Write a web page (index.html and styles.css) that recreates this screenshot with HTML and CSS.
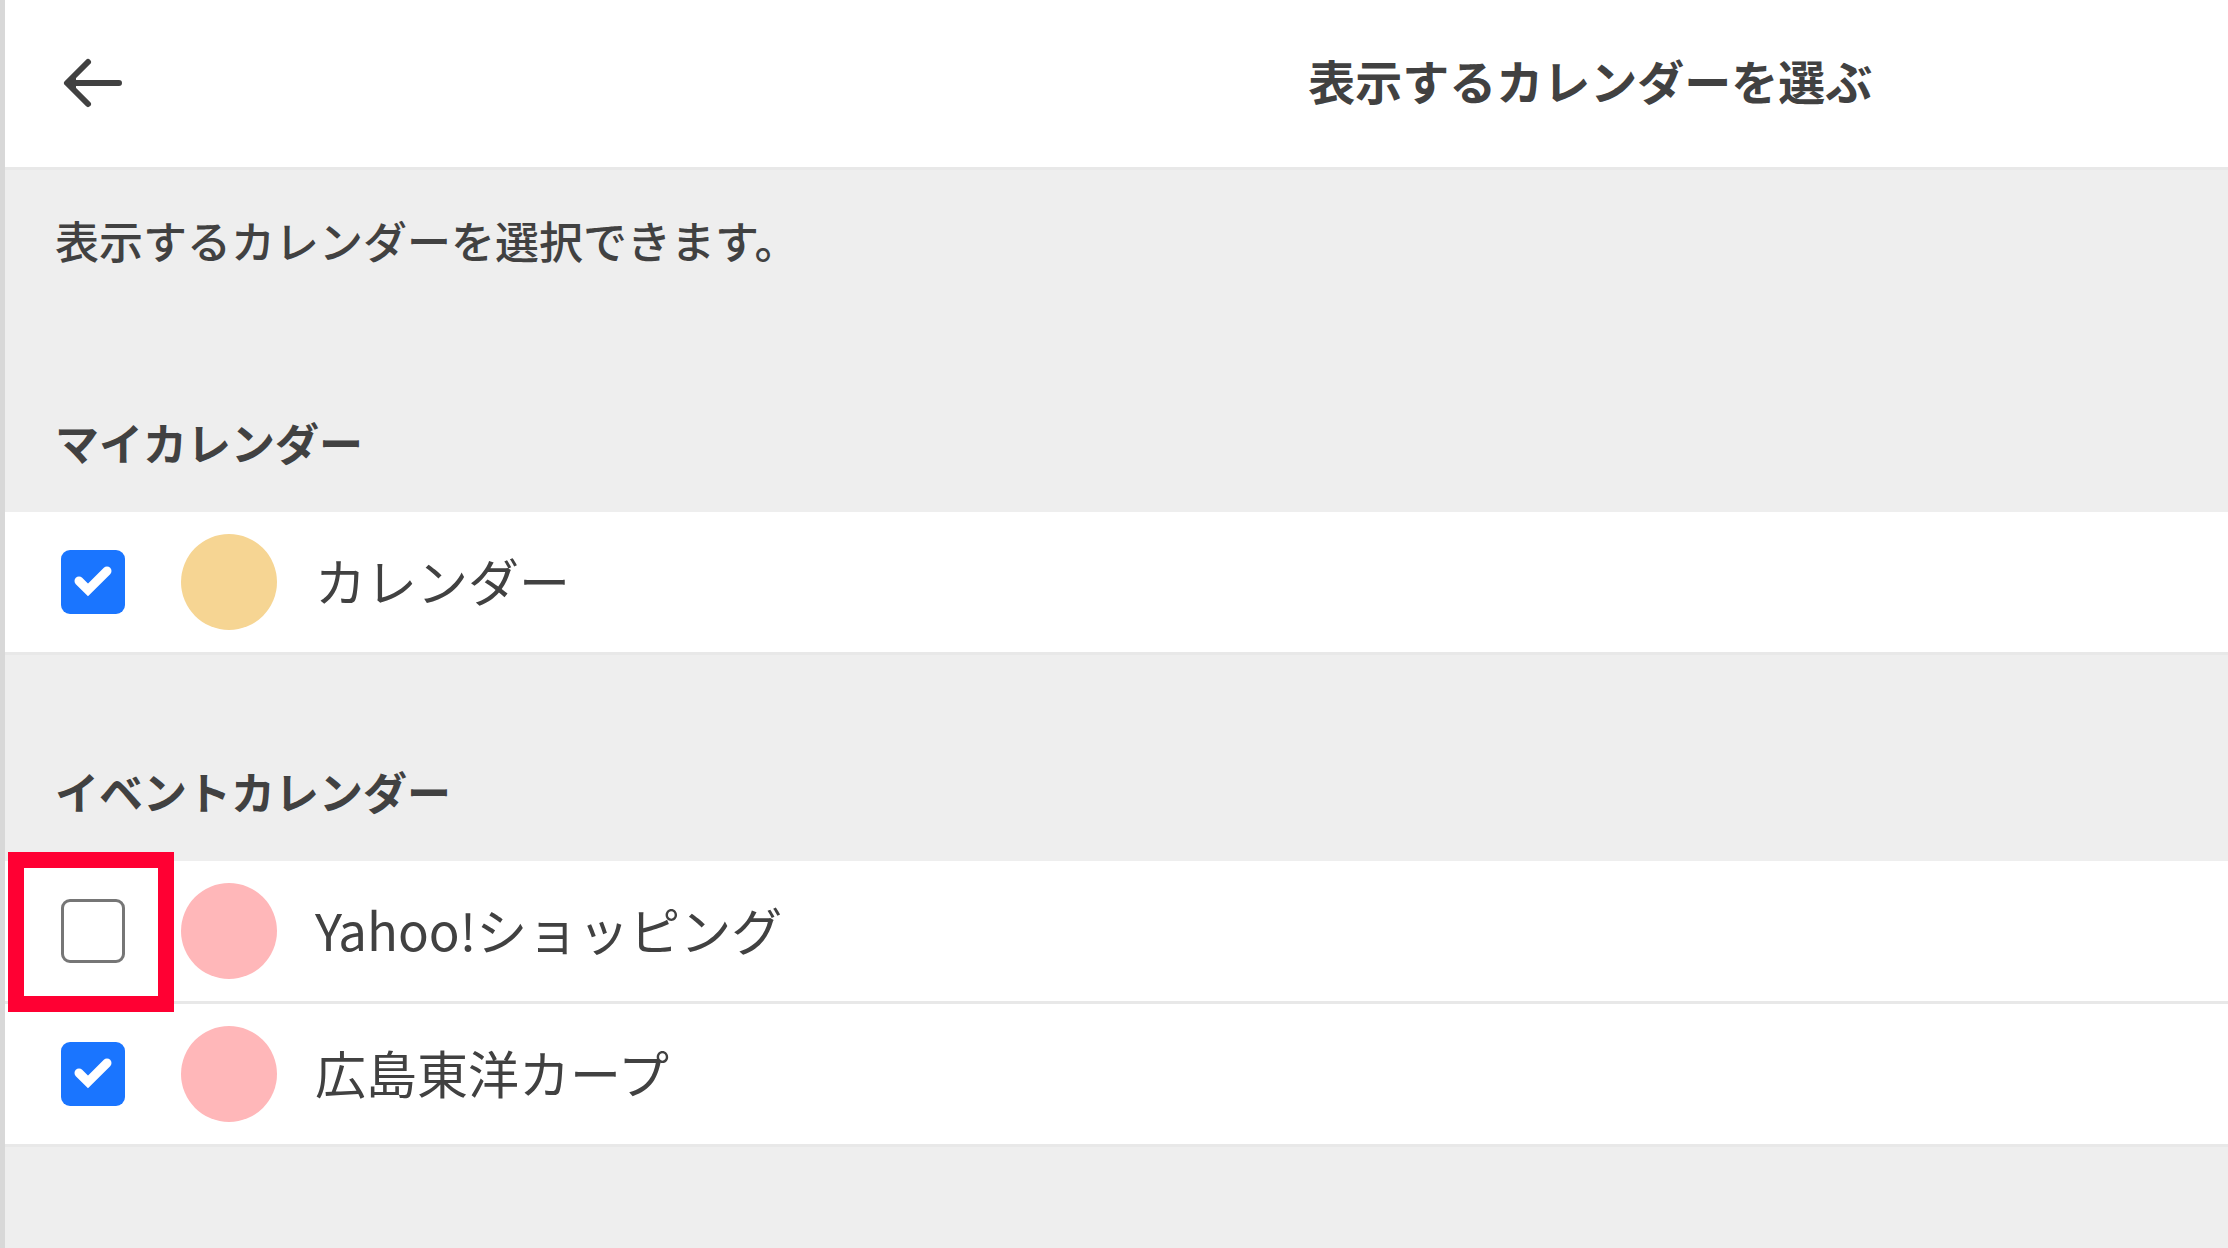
FILE: index.html
```
<!DOCTYPE html>
<html lang="ja">
<head>
    <meta charset="UTF-8">
    <meta name="viewport" content="width=device-width, initial-scale=1.0">
    <title>表示するカレンダーを選ぶ</title>
    <link rel="stylesheet" href="styles.css">
</head>
<body>

    <header class="header">
        <button type="button" class="back" aria-label="戻る">
            <svg width="64" height="64" viewBox="0 0 64 64" fill="none" stroke="#414141" stroke-width="6" stroke-linecap="round" stroke-linejoin="round">
                <path d="M27 11L6 32L27 53M7 32H58"/>
                <path d="M6 32L14 26V38Z" fill="#414141" stroke-width="2"/>
            </svg>
        </button>
        <h1 class="title">表示するカレンダーを選ぶ</h1>
    </header>

    <main>
        <p class="description">表示するカレンダーを選択できます。</p>

        <section>
            <h2 class="heading">マイカレンダー</h2>
            <ul class="list">
                <li class="row">
                    <input type="checkbox" class="check" id="calendar" checked>
                    <span class="color yellow"></span>
                    <label for="calendar">カレンダー</label>
                </li>
            </ul>
        </section>

        <section>
            <h2 class="heading">イベントカレンダー</h2>
            <ul class="list">
                <li class="row marked">
                    <input type="checkbox" class="check" id="shopping">
                    <span class="color pink"></span>
                    <label for="shopping">Yahoo!ショッピング</label>
                </li>
                <li class="row">
                    <input type="checkbox" class="check" id="carp" checked>
                    <span class="color pink"></span>
                    <label for="carp">広島東洋カープ</label>
                </li>
            </ul>
        </section>
    </main>

</body>
</html>
```
FILE: styles.css
```
*, *::before {
    box-sizing: border-box;
}
body {
    min-height: 100vh;
    margin: 0;
    border-left: 5px solid #d8d8d8;
    background-color: #eee;
    color: #414141;
    font-family: "Noto Sans CJK JP", sans-serif;
}
.header {
    display: flex;
    align-items: center;
    height: 170px;
    padding-bottom: 2px;
    border-bottom: 3px solid #e8e8e8;
    background-color: #fff;
}
.back {
    display: flex;
    margin-left: 56px;
    padding: 0;
    border: none;
    background: none;
    cursor: pointer;
}
.title {
    margin: 0 0 0 auto;
    padding-right: 16%;
    padding-bottom: 6px;
    font-size: 47px;
    line-height: 64px;
    white-space: nowrap;
}
.description {
    margin: 0;
    padding: 38px 50px 34px;
    font-size: 44px;
    font-weight: 500;
    line-height: 64px;
}
.heading {
    margin: 0;
    padding: 104px 50px 38px;
    font-size: 44px;
    line-height: 64px;
}
.list {
    margin: 0;
    padding: 0;
    list-style: none;
}
.row {
    display: flex;
    align-items: center;
    padding: 22px 56px;
    border-bottom: 3px solid #e8e8e8;
    background-color: #fff;
    font-size: 51px;
    line-height: 64px;
}
.row label {
    padding-bottom: 4px;
}
.check {
    appearance: none;
    width: 64px;
    height: 64px;
    margin: 0 56px 0 0;
    border: 3px solid #767676;
    border-radius: 9px;
    background-color: #fff;
}
.check:checked {
    border: none;
    background: #1a75ff url("data:image/svg+xml,%3Csvg xmlns='http://www.w3.org/2000/svg' viewBox='0 0 64 64'%3E%3Cpath d='M18 31L27 40L46 21' fill='none' stroke='white' stroke-width='9' stroke-linecap='round'/%3E%3C/svg%3E");
}
.color {
    width: 96px;
    height: 96px;
    margin-right: 38px;
    border-radius: 50%;
}
.yellow {
    background-color: #f6d593;
}
.pink {
    background-color: #ffb7b9;
}

/* red frame over the checkbox */
.marked {
    position: relative;
}
.marked::before {
    content: "";
    position: absolute;
    top: -9px;
    left: 3px;
    z-index: 1;
    width: 166px;
    height: 160px;
    border: 16px solid #ff0033;
    pointer-events: none;
}
```
